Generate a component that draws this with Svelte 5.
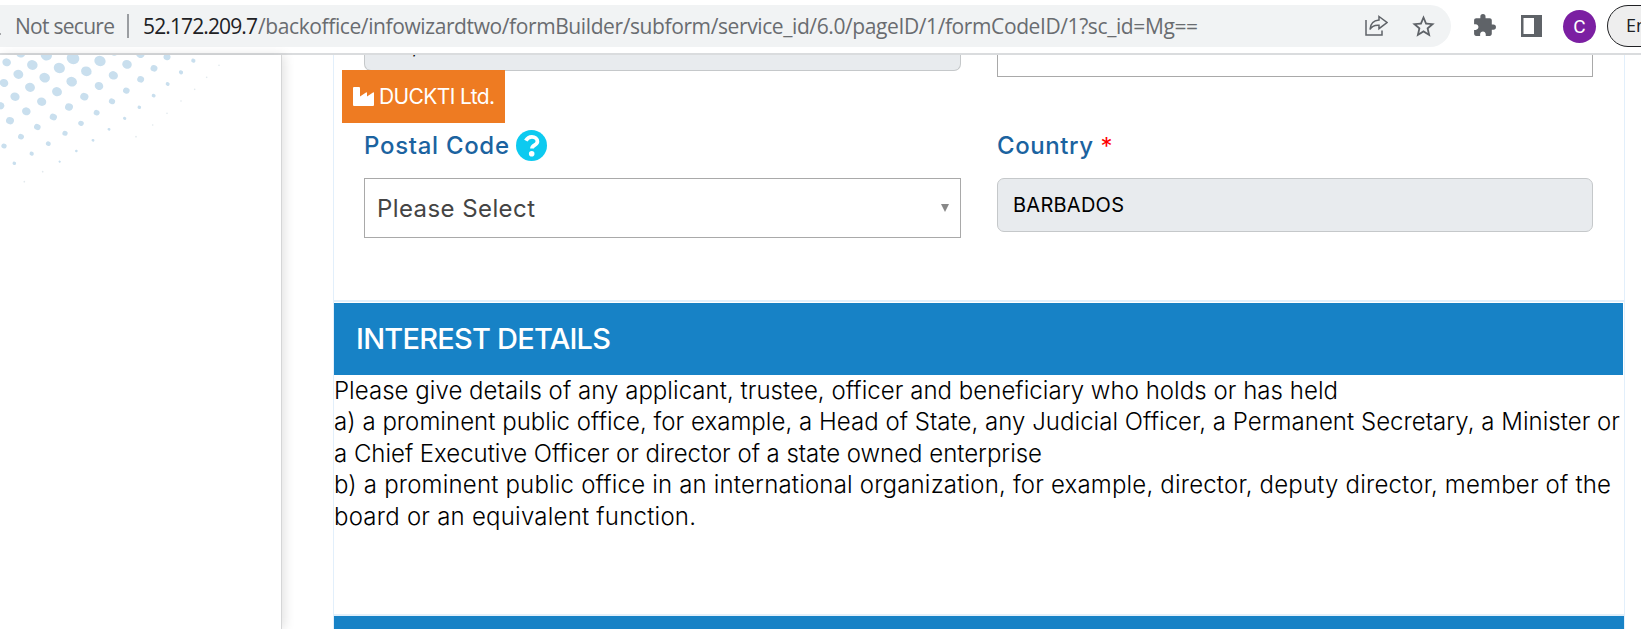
<script>
  const lines = [
    ['Please give details of any applicant, trustee, officer and beneficiary who holds or has held', 1004],
    ['a) a prominent public office, for example, a Head of State, any Judicial Officer, a Permanent Secretary, a Minister or', 1286],
    ['a Chief Executive Officer or director of a state owned enterprise', 708],
    ['b) a prominent public office in an international organization, for example, director, deputy director, member of the', 1277],
    ['board or an equivalent function.', 362]
  ];

  // Halftone dots: x, y, radius, in thirds of a pixel
  const dots = [
    [62,160,14],[20,187,13],[97,195,16],[139,166,17],[178,204,17],[219,175,19],[300,183,17],[259,214,16],
    [342,156,12],[381,193,14.5],[421,162,13],[462,205,10.5],[501,171,10.5],[580,182,6.5],[543,217,6.5],[503,252,6],
    [461,287,6],[418,322,5.5],[374,355,5],[327,388,4.5],[279,421,4.5],[229,453,4],[179,485,3.5],[55,223,15],
    [12,249,13],[134,233,16],[90,262,15],[45,290,14],[1,317,12],[215,245,16],[171,275,15],[125,305,14],
    [79,334,13],[30,362,12],[340,226,14],[297,258,13],[253,290,12.5],[207,321,12],[160,351,11],[112,381,10],
    [63,410,9],[12,438,8],[422,238,10.5],[379,272,10],[336,304,9.5],[290,338,9],[243,370,8.5],[195,400,8],
    [145,431,7.5],[95,461,6.5],[43,490,5.5]
  ];
  const faint = [
    [657,196],[620,232],[584,268],[543,303],[501,340],[458,375],[408,410],[128,515],[73,545]
  ];

  // Tracks a line of text out or in to the given width
  function fit(node, width) {
    const natural = node.getBoundingClientRect().width;
    node.style.letterSpacing = (width - natural) / (node.textContent.length - 1) + 'px';
  }
</script>

<div class="window">
  <header>
    <div class="address">
      <i class="warn"></i>
      <span class="muted secure"><span class="t" use:fit={100}>Not secure</span></span>
      <span class="bar"></span>
      <span class="url"><span class="t host" use:fit={115}>52.172.209.7</span></span>
      <span class="muted path"><span class="t" use:fit={940}>/backoffice/infowizardtwo/formBuilder/subform/service_id/6.0/pageID/1/formCodeID/1?sc_id=Mg==</span></span>
      <svg class="share" width="24" height="24" viewBox="0 0 24 24" fill="none" stroke="#5f6368" stroke-width="1.5">
        <path d="M2 6V21H18V16.500" />
        <path d="M15 2.500 23 8.500 15 14.700V11.300C10.500 11 7.500 12.500 6 15.500 6.300 10 9.500 6.500 15 6Z" />
      </svg>
      <svg class="star" width="27" height="27" viewBox="0 0 24 24" fill="#5f6368">
        <path d="M22 9.240l-7.190-.620L12 2 9.190 8.630 2 9.240l5.460 4.730L5.820 21 12 17.270 18.180 21l-1.630-7.030L22 9.240zM12 15.400l-3.760 2.270 1-4.280-3.320-2.880 4.380-.380L12 6.100l1.710 4.040 4.380.380-3.320 2.880 1 4.280L12 15.400z" />
      </svg>
    </div>
    <svg class="puzzle" width="25" height="25" viewBox="0 0 24 24" fill="#5f6368">
      <path d="M20.500 11H19V7c0-1.100-.9-2-2-2h-4V3.500a2.500 2.500 0 0 0-5 0V5H4c-1.100 0-1.990.9-1.990 2v3.800H3.500c1.490 0 2.700 1.210 2.700 2.700s-1.210 2.700-2.700 2.700H2V20c0 1.100.9 2 2 2h3.800v-1.500c0-1.490 1.210-2.700 2.700-2.700s2.700 1.210 2.700 2.700V22H17c1.100 0 2-.9 2-2v-4h1.500a2.500 2.500 0 0 0 0-5z" />
    </svg>
    <svg class="panel-icon" width="21" height="22" viewBox="0 0 21 22">
      <path fill="#5f6368" fill-rule="evenodd" d="M0 0H21V22H0ZM2.500 3V19H13V3Z" />
    </svg>
    <span class="avatar">C</span>
    <span class="update">En</span>
  </header>

  <main>
    <aside>
      <svg width="240" height="145" viewBox="0 165 720 435">
        {#each dots as [x, y, r]}
          <ellipse cx={x} cy={y} rx={r} ry={r * 0.9} fill="#c9dfee" transform="rotate(20 {x} {y})" />
        {/each}
        {#each faint as [x, y]}
          <circle cx={x} cy={y} r="2.500" fill="#e2e9ed" />
        {/each}
      </svg>
    </aside>

    <section>
      <div class="form">
        <div class="cell">
          <div class="input above"><span>,</span></div>
          <label for="postal"><span class="t" use:fit={145}>Postal Code</span>
            <svg class="help" width="31" height="31" viewBox="0 0 31 31">
              <circle cx="15.500" cy="15.500" r="15.500" fill="#0dcaf0" />
              <path d="M9.800 10.700C11.300 8 13 6.900 15.900 6.900 19 6.900 21.400 8.800 21.400 11.600 21.400 15.300 16 15 16 18.500" fill="none" stroke="#fff" stroke-width="3.800" />
              <circle cx="15.700" cy="23.700" r="2.800" fill="#fff" />
            </svg>
          </label>
          <div class="select" id="postal"><span class="t" use:fit={158}>Please Select</span><i class="arrow"></i></div>
          <div class="badge">
            <svg width="21" height="19" viewBox="0 0 21 19" fill="#fff"><path d="M0 1Q0 0 1 0H6Q7 0 7 1V9.500L13 5.500Q14 5 14 6V9.500L20 5.500Q21 5 21 6V18Q21 19 20 19H1Q0 19 0 18Z" /></svg>
            <span class="t" use:fit={116}>DUCKTI Ltd.</span>
          </div>
        </div>
        <div class="cell">
          <div class="select above"></div>
          <label for="country"><span class="t" use:fit={96}>Country</span><b>*</b></label>
          <div class="input" id="country"><span class="t" use:fit={111}>BARBADOS</span></div>
        </div>
      </div>

      <h2><span class="t" use:fit={255}>INTEREST DETAILS</span></h2>
      <div class="copy">
        {#each lines as [text, width]}
          <div><span class="t" use:fit={width}>{text}</span></div>
        {/each}
      </div>
      <div class="next"></div>
    </section>
  </main>
</div>

<style>
  :global(body) { margin: 0; background: #fff; }
  .window { width: 1641px; height: 629px; overflow: hidden; font-family: Inter, sans-serif; color: #000; }
  .window * { box-sizing: border-box; }
  .t { display: inline-block; white-space: pre; }
  svg { display: block; flex: none; }

  header { display: flex; align-items: flex-start; height: 55px; padding-top: 5px; border-bottom: 2px solid #dadcde; }
  .address { display: flex; align-items: center; flex: none; width: 1451px; height: 42px; background: #f1f3f4; border-radius: 0 21px 21px 0; font: 21px/42px "Open Sans", sans-serif; }
  .muted { color: #696c70; }
  .warn { width: 1px; height: 2px; margin-top: 15px; background: #a5a7aa; }
  .secure { width: 102px; margin-left: 14px; }
  .bar { width: 2px; height: 24px; margin-left: 10px; background: #9a9da1; }
  .url { width: 115px; margin-left: 14px; color: #202124; }
  .path { width: 939px; }
  .share { margin: 0 0 0 167px; }
  .star { margin-left: 22px; }
  .puzzle { margin: 8px 0 0 21px; }
  .panel-icon { margin: 10px 0 0 24px; }
  .avatar { flex: none; width: 33px; height: 33px; margin: 5px 0 0 21px; border-radius: 50%; background: #7b1fa2; color: #fff; text-align: center; font: 19px/34px Roboto, sans-serif; }
  .update { flex: none; width: 80px; height: 42px; margin-left: 11px; padding-left: 18px; border: 1.500px solid #202124; border-radius: 21px; background: #eee; color: #202124; font: 18px/38px "Open Sans", sans-serif; }

  main { display: flex; height: 574px; }
  aside { flex: none; width: 282px; border-right: 1px solid #d5d6d7; box-shadow: 3px 0 10px rgba(0, 0, 0, 0.110); }
  section { flex: none; width: 1292px; margin-left: 51px; border: solid #e2effb; border-width: 0 1px; }
  .form { display: grid; grid-template-columns: 597px 596px; column-gap: 36px; height: 247px; padding-left: 30px; border-bottom: 2px solid #e2f0fb; }
  .cell { position: relative; }
  label { display: flex; align-items: center; height: 34px; color: #1b63a0; font-size: 24px; font-weight: 450; }
  label .t { padding-top: 1px; }
  .help { margin-left: 6px; }
  label b { margin: 2px 0 0 7px; color: #f00; font-weight: 400; }
  .input { height: 54px; padding-left: 15px; border: 1px solid #c5c8ca; border-radius: 7px; background: #e8ebee; font-size: 20px; line-height: 53px; }
  .select { display: flex; align-items: center; justify-content: space-between; height: 60px; padding: 0 11px 0 12px; border: 1px solid #a9a9a9; color: #444; font-size: 24px; }
  label + .input, label + .select { margin-top: 16px; }
  .input.above { height: 16px; margin-bottom: 57px; border-top: 0; border-radius: 0 0 7px 7px; line-height: 0; padding-left: 47px; overflow: hidden; }
  .input.above span { display: block; margin-top: -9px; }
  .select.above { height: 22px; margin-bottom: 51px; border-top: 0; }
  .arrow { width: 0; height: 0; border: solid transparent; border-width: 8px 4.500px 0; border-top-color: #888; }
  .badge { position: absolute; left: -22px; top: 15px; display: flex; align-items: center; gap: 5px; width: 163px; height: 53px; padding-left: 11px; background: #ee7b22; color: #fff; font-size: 21px; }

  h2 { width: 1289px; height: 72px; margin: 1px 0 0; padding-left: 22px; background: #1782c6; color: #fff; font-size: 29px; font-weight: 550; line-height: 72px; }
  .copy { height: 239px; font-size: 24px; font-weight: 340; line-height: 31.400px; }
  .next { height: 15px; border-top: 2px solid #e2f0fb; background: #1782c6; }
</style>
